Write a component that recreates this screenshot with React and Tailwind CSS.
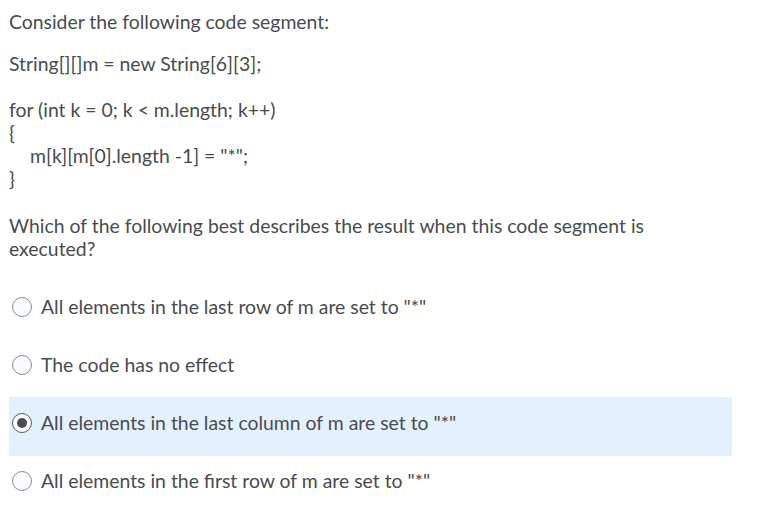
import React from "react";

function Radio({ checked }) {
  return (
    <span
      className={
        "flex h-[20px] w-[20px] shrink-0 items-center justify-center rounded-full border " +
        (checked ? "border-[#565a5c] bg-white" : "border-[#868c8f] bg-[#f9fbff]")
      }
    >
      {checked && <span className="block h-[10px] w-[10px] rounded-full bg-[#494c4e]" />}
    </span>
  );
}

function Option({ text, checked, className }) {
  return (
    <div
      className={
        "flex w-[723px] items-start gap-[9px] pl-[3px] " +
        (checked ? "bg-[#e3f0fd] " : "") +
        className
      }
    >
      <span className="flex h-[23px] items-center">
        <Radio checked={checked} />
      </span>
      <span>{text}</span>
    </div>
  );
}

export default function App() {
  return (
    <div
      className="h-[515px] w-[783px] bg-white text-[19.4px] leading-[23px] text-[#494c4e]"
      style={{ fontFamily: "Lato, 'Open Sans', sans-serif" }}
    >
      <div className="pl-[9px] pt-[10px]">
        <p>Consider the following code segment:</p>
        <p className="mt-[19px]">String[][]m = new String[6][3];</p>
        <p className="mt-[23px]">for (int k = 0; k &lt; m.length; k++)</p>
        <p>{"{"}</p>
        <p className="pl-[21px]">m[k][m[0].length -1] = "*";</p>
        <p>{"}"}</p>
        <p className="mt-[24px] w-[660px]">
          Which of the following best describes the result when this code segment is executed?
        </p>
      </div>
      <div className="mt-[18px] flex flex-col pl-[9px]">
        <Option className="h-[58px] pt-[17px]" text={'All elements in the last row of m are set to "*"'} />
        <Option className="h-[61px] pt-[17px]" text="The code has no effect" />
        <Option className="h-[59px] pt-[14px]" text={'All elements in the last column of m are set to "*"'} checked />
        <Option className="h-[58px] pt-[13px]" text={'All elements in the first row of m are set to "*"'} />
      </div>
    </div>
  );
}
